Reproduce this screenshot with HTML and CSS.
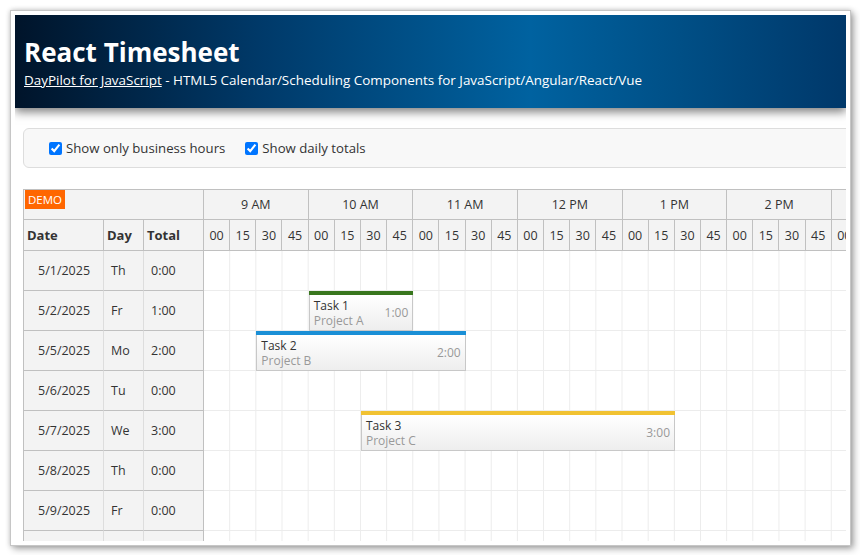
FILE: index.html
```html
<!DOCTYPE html>
<html lang="en">
<head>
<meta charset="utf-8">
<title>React Timesheet</title>
<link rel="stylesheet" href="styles.css">
</head>
<body>
<div class="window">
  <div class="viewport">
    <header class="header">
      <h1 class="title">React Timesheet</h1>
      <div class="subtitle"><a class="link" href="#">DayPilot for JavaScript</a> - HTML5 Calendar/Scheduling Components for JavaScript/Angular/React/Vue</div>
    </header>
    <main class="main">
      <div class="toolbar">
        <label class="check"><input class="box" type="checkbox" checked><span>Show only business hours</span></label>
        <label class="check"><input class="box" type="checkbox" checked><span>Show daily totals</span></label>
      </div>
      <div class="scheduler">
        <div class="rowheaders">
          <div class="corner"><span class="demo">DEMO</span></div>
          <div class="rh-head">
            <div class="colhead">Date</div>
            <div class="colhead">Day</div>
            <div class="colhead last">Total</div>
          </div>
          <div class="rh-row"><div class="rh-cell date">5/1/2025</div><div class="rh-cell">Th</div><div class="rh-cell last">0:00</div></div>
          <div class="rh-row"><div class="rh-cell date">5/2/2025</div><div class="rh-cell">Fr</div><div class="rh-cell last">1:00</div></div>
          <div class="rh-row"><div class="rh-cell date">5/5/2025</div><div class="rh-cell">Mo</div><div class="rh-cell last">2:00</div></div>
          <div class="rh-row"><div class="rh-cell date">5/6/2025</div><div class="rh-cell">Tu</div><div class="rh-cell last">0:00</div></div>
          <div class="rh-row"><div class="rh-cell date">5/7/2025</div><div class="rh-cell">We</div><div class="rh-cell last">3:00</div></div>
          <div class="rh-row"><div class="rh-cell date">5/8/2025</div><div class="rh-cell">Th</div><div class="rh-cell last">0:00</div></div>
          <div class="rh-row"><div class="rh-cell date">5/9/2025</div><div class="rh-cell">Fr</div><div class="rh-cell last">0:00</div></div>
          <div class="rh-row"><div class="rh-cell date"></div><div class="rh-cell"></div><div class="rh-cell last"></div></div>
        </div>
        <div class="timeline">
          <div class="hours">
            <div class="hour">9 AM</div>
            <div class="hour">10 AM</div>
            <div class="hour">11 AM</div>
            <div class="hour">12 PM</div>
            <div class="hour">1 PM</div>
            <div class="hour">2 PM</div>
            <div class="hour"></div>
          </div>
          <div class="minutes">
            <div class="min">00</div><div class="min">15</div><div class="min">30</div><div class="min">45</div>
            <div class="min">00</div><div class="min">15</div><div class="min">30</div><div class="min">45</div>
            <div class="min">00</div><div class="min">15</div><div class="min">30</div><div class="min">45</div>
            <div class="min">00</div><div class="min">15</div><div class="min">30</div><div class="min">45</div>
            <div class="min">00</div><div class="min">15</div><div class="min">30</div><div class="min">45</div>
            <div class="min">00</div><div class="min">15</div><div class="min">30</div><div class="min">45</div>
            <div class="min">00</div><div class="min"></div><div class="min"></div><div class="min"></div>
          </div>
          <div class="grid">
            <div class="grid-row"></div>
            <div class="grid-row"></div>
            <div class="grid-row"></div>
            <div class="grid-row"></div>
            <div class="grid-row"></div>
            <div class="grid-row"></div>
            <div class="grid-row"></div>
            <div class="grid-row"></div>

            <div class="event" style="top:40px;left:104.67px;width:104.67px">
              <div class="bar" style="background:#38761d"></div>
              <div class="event-body">
                <div class="event-text"><div class="event-name">Task 1</div><div class="event-project">Project A</div></div>
                <div class="event-duration">1:00</div>
              </div>
            </div>
            <div class="event" style="top:80px;left:52.33px;width:209.33px">
              <div class="bar" style="background:#1a8fd6"></div>
              <div class="event-body">
                <div class="event-text"><div class="event-name">Task 2</div><div class="event-project">Project B</div></div>
                <div class="event-duration">2:00</div>
              </div>
            </div>
            <div class="event" style="top:160px;left:157px;width:314px">
              <div class="bar" style="background:#f1c232"></div>
              <div class="event-body">
                <div class="event-text"><div class="event-name">Task 3</div><div class="event-project">Project C</div></div>
                <div class="event-duration">3:00</div>
              </div>
            </div>
          </div>
        </div>
      </div>
    </main>
  </div>
</div>
</body>
</html>
```

FILE: styles.css
```css
html, body {
  margin: 0;
  padding: 0;
  background: #ffffff;
}

body {
  font-family: "Open Sans", "Noto Sans", sans-serif;
  color: #333333;
  width: 860px;
  height: 555px;
  overflow: hidden;
}

.window {
  box-sizing: border-box;
  width: 841px;
  height: 536px;
  margin: 10px 0 0 10px;
  padding: 4px;
  border: 1px solid #c6c6c6;
  background: #ffffff;
  box-shadow: 0 0 5px rgba(0, 0, 0, 0.18), 3px 3px 7px rgba(0, 0, 0, 0.32);
}

.viewport {
  width: 100%;
  height: 100%;
  overflow: hidden;
  position: relative;
}

/* header */
.header {
  box-sizing: border-box;
  height: 93px;
  padding: 22px 9px 0;
  color: #ffffff;
  background: linear-gradient(to right, #00142a 0%, #003a6a 30%, #0062a0 62%, #004f86 80%, #00386a 100%);
  box-shadow: 0 4px 9px rgba(0, 0, 0, 0.5);
  position: relative;
  z-index: 1;
}

.title {
  margin: 0;
  font-size: 26px;
  line-height: 30px;
  font-weight: 700;
}

.subtitle {
  margin-top: 4px;
  font-size: 13.45px;
  line-height: 18px;
  white-space: nowrap;
}

.link {
  color: #ffffff;
  text-decoration: underline;
}

/* main */
.main {
  padding: 20px 0 0 8px;
}

.toolbar {
  box-sizing: border-box;
  width: 900px;
  height: 40px;
  display: flex;
  align-items: center;
  gap: 20px;
  padding-left: 25px;
  border: 1px solid #dddddd;
  border-radius: 6px;
  background: #f8f8f8;
  font-size: 13.2px;
  margin-bottom: 21px;
}

.check {
  display: flex;
  align-items: center;
  gap: 4px;
  white-space: nowrap;
}

.box {
  margin: 0;
  width: 13px;
  height: 13px;
}

/* scheduler */
.scheduler {
  display: flex;
  width: 1100px;
  border-top: 1px solid #c0c0c0;
  font-size: 12.5px;
  color: #333333;
}

.rowheaders {
  flex: none;
  width: 181px;
  box-sizing: border-box;
  border-left: 1px solid #c0c0c0;
  background: #f3f3f3;
}

.corner {
  box-sizing: border-box;
  height: 30px;
  border-bottom: 1px solid #c0c0c0;
  border-right: 1px solid #c0c0c0;
  padding: 0 0 0 1px;
}

.demo {
  display: inline-block;
  background: #ff6600;
  color: #ffffff;
  font-size: 11.5px;
  line-height: 19px;
  padding: 0 3px;
}

.rh-head,
.rh-row {
  display: grid;
  grid-template-columns: 80px 40px 60px;
}

.rh-head {
  height: 31px;
}

.colhead {
  box-sizing: border-box;
  border-right: 1px solid #c0c0c0;
  border-bottom: 1px solid #c0c0c0;
  font-weight: 700;
  font-size: 13px;
  padding-left: 3px;
  display: flex;
  align-items: center;
}

.rh-row {
  height: 40px;
}

.rh-cell {
  box-sizing: border-box;
  border-right: 1px solid #dddddd;
  border-bottom: 1px solid #c0c0c0;
  padding-left: 7px;
  display: flex;
  align-items: center;
}

.rh-cell.date {
  padding-left: 14px;
}

.rh-cell.last,
.colhead.last {
  border-right-color: #c0c0c0;
}

.timeline {
  flex: none;
  width: 732.67px;
}

.hours,
.minutes {
  display: flex;
  background: #f3f3f3;
}

.hour {
  box-sizing: border-box;
  flex: none;
  width: 104.667px;
  height: 30px;
  border-right: 1px solid #c0c0c0;
  border-bottom: 1px solid #c0c0c0;
  display: flex;
  align-items: center;
  justify-content: center;
}

.min {
  box-sizing: border-box;
  flex: none;
  width: 26.1667px;
  height: 31px;
  border-right: 1px solid #c0c0c0;
  border-bottom: 1px solid #c0c0c0;
  display: flex;
  align-items: center;
  justify-content: center;
}

.grid {
  position: relative;
}

.grid-row {
  box-sizing: border-box;
  height: 40px;
  border-bottom: 1px solid #ececec;
  background-image: linear-gradient(to right, transparent calc(100% - 1px), #ececec calc(100% - 1px));
  background-size: 26.1667px 100%;
}

/* events */
.event {
  position: absolute;
  box-sizing: border-box;
  height: 40px;
  display: flex;
  flex-direction: column;
}

.bar {
  height: 4px;
  flex: none;
}

.event-body {
  flex: 1;
  box-sizing: border-box;
  border: 1px solid #c8c8c8;
  border-top: none;
  background: linear-gradient(to bottom, #ffffff 0%, #eeeeee 100%);
  display: flex;
  align-items: center;
  justify-content: space-between;
  padding: 0 4px;
  font-size: 12px;
  line-height: 15px;
}

.event-name {
  color: #333333;
}

.event-project,
.event-duration {
  color: #999999;
}
```
